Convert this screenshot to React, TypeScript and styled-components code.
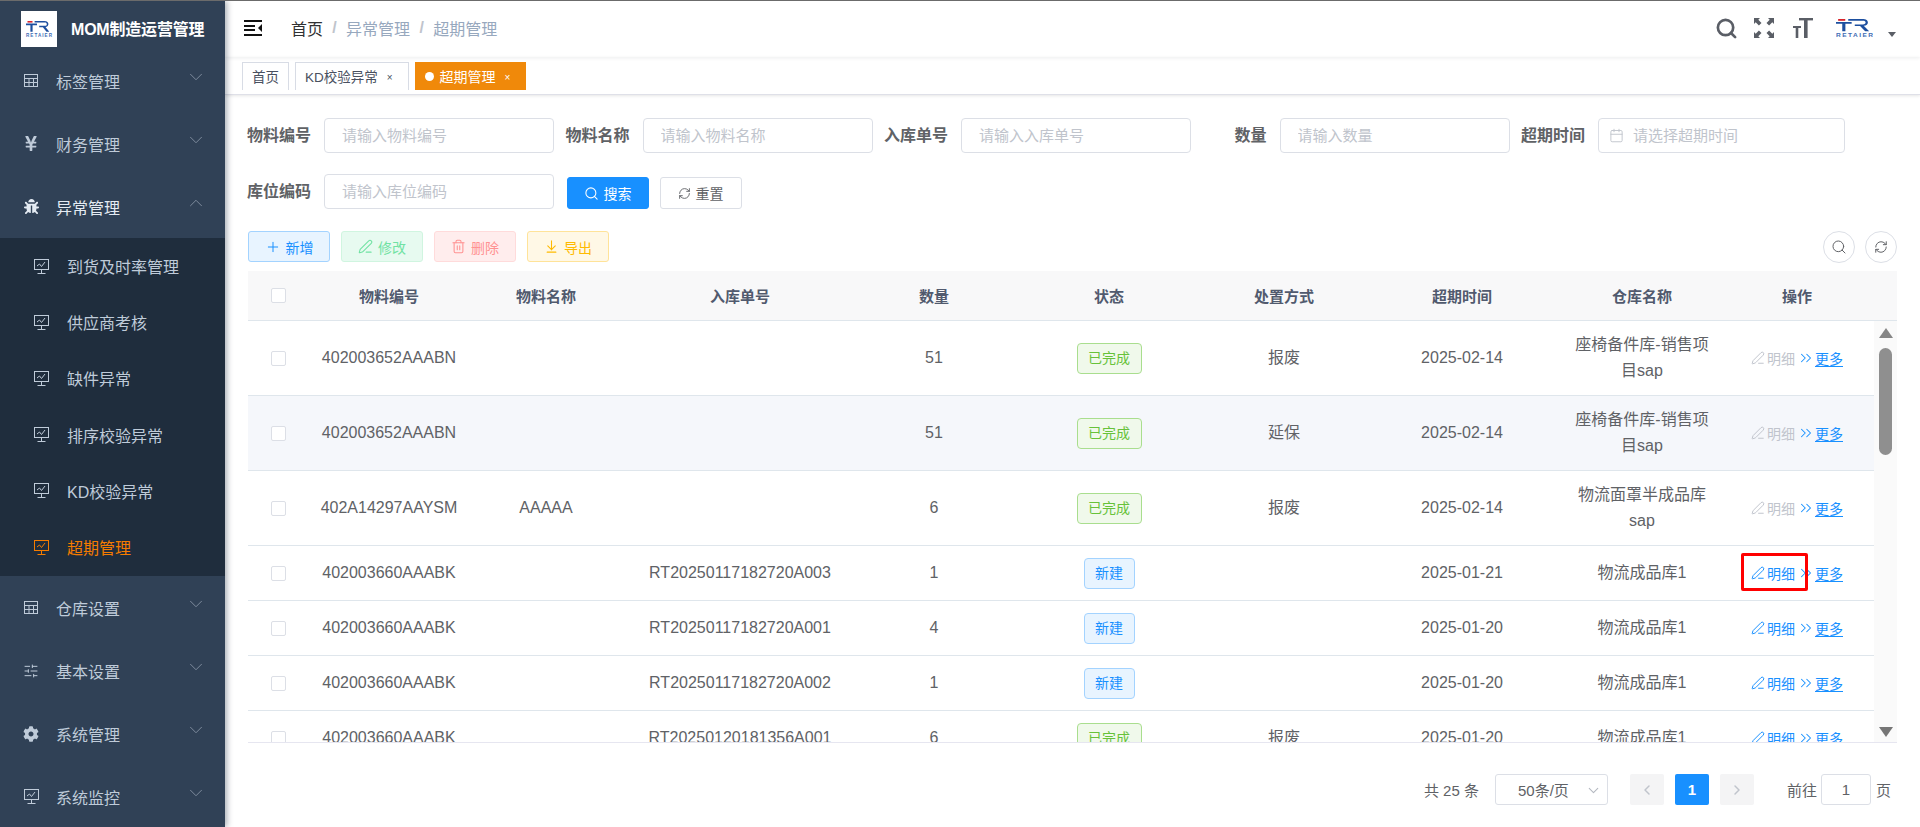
import { ReactNode } from 'react';
import styled, { createGlobalStyle } from 'styled-components';
import {
  ArrowDownToLine,
  Calendar,
  ChevronDown,
  ChevronLeft,
  ChevronRight,
  ChevronUp,
  ChevronsRight,
  PenLine,
  Plus,
  RefreshCw,
  Search,
  SlidersHorizontal,
  Trash2,
} from 'lucide-react';
import { FaBug, FaCog, FaYenSign } from 'react-icons/fa';

const GlobalStyle = createGlobalStyle`
  html, body {
    margin: 0;
    padding: 0;
    height: 100%;
    background: #fff;
  }
  body {
    font-family: "Liberation Sans", "Noto Sans CJK SC", sans-serif;
    color: #606266;
    overflow: hidden;
  }
  #root {
    height: 100%;
  }
  * {
    box-sizing: border-box;
  }
`;

// Layout
const Page = styled.div`
  display: flex;
  height: 100vh;
  border-top: 1px solid #6b6b6b;
  overflow: hidden;
`;

const Sidebar = styled.aside`
  width: 225px;
  flex-shrink: 0;
  background: #304156;
  box-shadow: 2px 0 6px rgba(0, 21, 41, 0.35);
  position: relative;
  z-index: 3;
  overflow: hidden;
`;

const Brand = styled.div`
  height: 48px;
  display: flex;
  align-items: flex-start;
  padding: 10px 0 0 21px;
`;

const BrandLogo = styled.div`
  width: 36px;
  height: 36px;
  background: #fff;
  display: flex;
  align-items: center;
  justify-content: center;
`;

const BrandTitle = styled.div`
  margin-left: 14px;
  font-size: 16px;
  font-weight: 700;
  letter-spacing: -0.2px;
  color: #fff;
  line-height: 38px;
  white-space: nowrap;
`;

const MenuRow = styled.div<{ $open?: boolean }>`
  height: 63px;
  display: flex;
  align-items: center;
  padding: 0 18px 0 23px;
  font-size: 16px;
  color: ${(p) => (p.$open ? '#e4ebf3' : '#bfcbd9')};
`;

const MenuIcon = styled.span`
  width: 16px;
  height: 20px;
  display: flex;
  align-items: center;
  justify-content: center;
  margin-right: 17px;
`;

const MenuCaret = styled.span`
  margin-left: auto;
  display: flex;
  color: #8391a2;
  margin-bottom: 7px;
`;

const SubMenu = styled.div`
  background: #1f2d3d;
  padding-bottom: 1px;
`;

const SubRow = styled.div<{ $active?: boolean }>`
  height: 56.2px;
  display: flex;
  align-items: center;
  padding-left: 34px;
  font-size: 16px;
  color: ${(p) => (p.$active ? '#f57c00' : '#bfcbd9')};
`;

const SubIcon = styled.span`
  display: flex;
  margin-right: 18px;
`;

const Main = styled.main`
  flex: 1;
  min-width: 0;
  display: flex;
  flex-direction: column;
`;

const Navbar = styled.header`
  height: 56px;
  display: flex;
  align-items: center;
  padding: 0 24px 2px 19px;
  box-shadow: 0 1px 4px rgba(0, 21, 41, 0.08);
  position: relative;
  z-index: 1;
`;

const Breadcrumb = styled.nav`
  display: flex;
  align-items: center;
  margin-left: 29px;
  font-size: 16px;
`;

const Crumb = styled.span<{ $home?: boolean }>`
  color: ${(p) => (p.$home ? '#303133' : '#97a8be')};
`;

const CrumbSep = styled.span`
  margin: 0 9.3px;
  color: #c0c4cc;
  font-weight: 700;
`;

const NavTools = styled.div`
  margin-left: auto;
  display: flex;
  align-items: center;
`;

const NavTool = styled.span<{ $gap: number }>`
  display: flex;
  margin-left: ${(p) => p.$gap}px;
  color: #5a5e66;
`;

const NavCaret = styled.span`
  width: 0;
  height: 0;
  margin: 13px 0 0 15px;
  border-left: 4px solid transparent;
  border-right: 4px solid transparent;
  border-top: 5px solid #5a5e66;
`;

const TabBar = styled.div`
  height: 38px;
  display: flex;
  gap: 6px;
  padding: 5px 0 0 17px;
  border-bottom: 1px solid #dfe0e8;
  box-shadow: 0 1px 3px rgba(0, 0, 0, 0.1);
  position: relative;
`;

const Tab = styled.div<{ $active?: boolean }>`
  height: 28px;
  display: flex;
  align-items: center;
  padding: 0 9px 1px;
  font-size: ${(p) => (p.$active ? '14px' : '13.5px')};
  color: ${(p) => (p.$active ? '#fff' : '#495060')};
  background: ${(p) => (p.$active ? '#f0890a' : '#fff')};
  border: 1px solid ${(p) => (p.$active ? '#f0890a' : '#d8dce5')};
  border-bottom: none;
`;

const TabDot = styled.span`
  width: 9px;
  height: 9px;
  border-radius: 50%;
  background: #fff;
  margin-right: 6px;
`;

const TabClose = styled.span`
  font-size: 10px;
  margin: 4px 6px 0 9px;
  line-height: 1;
`;

const Content = styled.div`
  flex: 1;
  min-height: 0;
`;

const SearchForm = styled.form`
  display: flex;
  flex-direction: column;
  gap: 21px;
  padding: 23px 0 0 19px;
`;

const FormRow = styled.div`
  display: flex;
  align-items: flex-start;
`;

const FormItem = styled.div`
  display: flex;
  align-items: center;
  margin-right: 8.5px;
  position: relative;
`;

const FormLabel = styled.label`
  width: 80px;
  padding: 0 13px 3px 0;
  text-align: right;
  font-size: 16px;
  font-weight: 700;
  color: #606266;
  white-space: nowrap;
`;

const TextInput = styled.input<{ $wide?: boolean }>`
  width: ${(p) => (p.$wide ? '247px' : '230px')};
  height: 35px;
  padding: 0 0 0 ${(p) => (p.$wide ? '34px' : '17px')};
  border: 1px solid #dcdfe6;
  border-radius: 4px;
  font: inherit;
  font-size: 15px;
  outline: none;
  &::placeholder {
    color: #c0c4cc;
    opacity: 1;
  }
`;

const DateIcon = styled.span`
  position: absolute;
  left: 91px;
  top: 10px;
  display: flex;
  color: #c0c4cc;
`;

const SearchButtons = styled.div`
  display: flex;
  gap: 11px;
  margin: 3px 0 0 4px;
`;

const Button = styled.button<{ $primary?: boolean }>`
  width: 82px;
  height: 32px;
  display: flex;
  align-items: center;
  justify-content: center;
  gap: 5px;
  padding: 0;
  font: inherit;
  font-size: 14px;
  border-radius: 3px;
  color: ${(p) => (p.$primary ? '#fff' : '#606266')};
  background: ${(p) => (p.$primary ? '#1890ff' : '#fff')};
  border: 1px solid ${(p) => (p.$primary ? '#1890ff' : '#dcdfe6')};
`;

const ActionBar = styled.div`
  display: flex;
  align-items: center;
  height: 31px;
  margin: 22px 23px 9px 23px;
  gap: 11px;
`;

const tones = {
  primary: { bg: '#e8f4ff', line: '#a3d3ff', text: '#1890ff' },
  success: { bg: '#e7faf0', line: '#d0f5e0', text: '#71e2a3' },
  danger: { bg: '#ffeded', line: '#ffdbdb', text: '#ff9292' },
  warning: { bg: '#fff8e6', line: '#ffe399', text: '#ffba00' },
};

const ToneButton = styled.button<{ $tone: keyof typeof tones }>`
  width: 82px;
  height: 31px;
  display: flex;
  align-items: center;
  justify-content: center;
  gap: 5px;
  padding: 0;
  font: inherit;
  font-size: 14px;
  border-radius: 3px;
  color: ${(p) => tones[p.$tone].text};
  background: ${(p) => tones[p.$tone].bg};
  border: 1px solid ${(p) => tones[p.$tone].line};
`;

const RoundGroup = styled.div`
  margin-left: auto;
  display: flex;
  gap: 10px;
`;

const RoundButton = styled.button`
  width: 32px;
  height: 32px;
  border-radius: 50%;
  border: 1px solid #dcdfe6;
  background: #fff;
  color: #606266;
  display: flex;
  align-items: center;
  justify-content: center;
  padding: 0;
`;

// Table
const TableWrap = styled.div`
  margin: 0 23px 0 23px;
`;

const gridColumns = '60px 162px 152px 236px 152px 198px 152px 204px 156px 154px';

const HeadRow = styled.div`
  height: 50px;
  display: grid;
  grid-template-columns: ${gridColumns};
  align-items: center;
  background: #f8f8f9;
  border-bottom: 1px solid #dfe6ec;
  font-size: 15px;
  font-weight: 700;
  color: #515a6e;
  text-align: center;
`;

const TableBody = styled.div`
  display: flex;
  height: 422px;
  border-bottom: 1px solid #e6e6f0;
`;

const RowsClip = styled.div`
  width: 1626px;
  overflow: hidden;
`;

const BodyRow = styled.div<{ $tall: boolean; $hover: boolean }>`
  height: ${(p) => (p.$tall ? '75px' : '55px')};
  display: grid;
  grid-template-columns: ${gridColumns};
  align-items: center;
  border-bottom: 1px solid #dfe6ec;
  background: ${(p) => (p.$hover ? '#f5f7fb' : '#fff')};
  font-size: 16px;
  color: #606266;
  text-align: center;
`;

const Cell = styled.div`
  padding: 0 10px;
  line-height: 26px;
  white-space: normal;
`;

const CodeCell = styled(Cell)`
  padding: 0;
  white-space: nowrap;
`;

const CheckCell = styled.div`
  display: flex;
  justify-content: center;
`;

const CheckBox = styled.span`
  width: 15px;
  height: 15px;
  border: 1px solid #dcdfe6;
  border-radius: 2px;
  background: #fff;
`;

const StatusTag = styled.span<{ $done: boolean }>`
  display: inline-block;
  height: 31px;
  line-height: 29px;
  padding: 0 10.5px;
  font-size: 14px;
  border-radius: 4px;
  color: ${(p) => (p.$done ? '#67c23a' : '#1890ff')};
  background: ${(p) => (p.$done ? '#f0f9eb' : '#e8f4ff')};
  border: 1px solid ${(p) => (p.$done ? '#a9de8e' : '#a3d3ff')};
`;

const OpsCell = styled.div`
  display: flex;
  justify-content: center;
  align-items: center;
  gap: 2px;
  font-size: 14px;
  position: relative;
`;

const OpLink = styled.span<{ $muted?: boolean }>`
  display: inline-flex;
  align-items: center;
  gap: ${(p) => (p.$muted !== undefined ? '2px' : '0')};
  color: ${(p) => (p.$muted ? '#c0c4cc' : '#1890ff')};
`;

const MoreText = styled.span`
  text-decoration: underline;
  text-underline-offset: 2px;
  text-decoration-thickness: 1px;
`;

const Highlight = styled.span`
  position: absolute;
  left: 21px;
  top: -10px;
  width: 67px;
  height: 38px;
  border: 3px solid #f00;
  border-radius: 2px;
  pointer-events: none;
`;

const ScrollTrack = styled.div`
  width: 23px;
  background: #fafafa;
  display: flex;
  flex-direction: column;
  align-items: center;
  padding: 7px 0 5px;
`;

const ScrollUp = styled.span`
  width: 0;
  height: 0;
  border-left: 7.5px solid transparent;
  border-right: 7.5px solid transparent;
  border-bottom: 10px solid #868686;
`;

const ScrollThumb = styled.span`
  width: 13px;
  height: 107px;
  margin-top: 10px;
  border-radius: 7px;
  background: #8f8f8f;
`;

const ScrollDown = styled.span`
  width: 0;
  height: 0;
  margin-top: auto;
  border-left: 7.5px solid transparent;
  border-right: 7.5px solid transparent;
  border-top: 10px solid #767676;
`;

// Pagination
const Pagination = styled.div`
  display: flex;
  align-items: center;
  justify-content: flex-end;
  height: 31px;
  margin-top: 31px;
  padding-right: 29px;
  font-size: 15px;
  color: #606266;
`;

const PageSelect = styled.div`
  width: 113px;
  height: 31px;
  margin: 0 22px 0 16px;
  padding-left: 22px;
  display: flex;
  align-items: center;
  border: 1px solid #dcdfe6;
  border-radius: 3px;
  position: relative;
`;

const SelectCaret = styled.span`
  position: absolute;
  right: 5px;
  top: 7px;
  display: flex;
  color: #b4b8c0;
`;

const PageButton = styled.span<{ $current?: boolean }>`
  width: 34px;
  height: 31px;
  margin-right: 11px;
  display: flex;
  align-items: center;
  justify-content: center;
  border-radius: 2px;
  font-size: 15px;
  font-weight: 700;
  color: ${(p) => (p.$current ? '#fff' : '#c0c4cc')};
  background: ${(p) => (p.$current ? '#1890ff' : '#f4f4f5')};
`;

const GotoInput = styled.div`
  width: 50px;
  height: 31px;
  margin: 0 5px 0 4px;
  display: flex;
  align-items: center;
  justify-content: center;
  border: 1px solid #dcdfe6;
  border-radius: 3px;
`;

const GotoLabel = styled.span`
  margin-left: 22px;
`;

// Drawn icons
const Logo = ({ w, h, box }: { w: number; h: number; box: string }) => (
  <svg width={w} height={h} viewBox={box} preserveAspectRatio="none">
    <rect x="6.5" y="11" width="5" height="1.6" fill="#d8232a" />
    <path d="M5 13.600h11v1.600h-4.400v6.600H9.400v-6.600H5z" fill="#1d4f9f" />
    <path
      d="M13.600 11h9.600c3.200 0 4.200 1.400 4.200 3.100 0 1.600-1 2.700-2.900 3l3.800 4.700h-2.800l-3.600-4.500h-3.700v-1.500h5.600c1.400 0 2-.6 2-1.600 0-1-.6-1.600-2-1.600h-10.200z"
      fill="#1d4f9f"
    />
    <text x="18" y="27" fontSize="4.600" fontWeight="700" fill="#3f6db5" textAnchor="middle" textLength="26" fontFamily="Liberation Sans, sans-serif">
      RETAIER
    </text>
  </svg>
);

const MonitorIcon = () => (
  <svg width="15" height="15" viewBox="0 0 15 15" fill="none" stroke="currentColor" strokeWidth="1">
    <rect x="0.5" y="0.5" width="14" height="10" />
    <path d="M3 7l2.500-2 2 2.500L11 3" />
    <path d="M7.500 10.500v3.500M3.500 14.500h8" />
  </svg>
);

const GridIcon = () => (
  <svg width="14" height="13" viewBox="0 0 14 13" fill="none" stroke="currentColor" strokeWidth="1">
    <rect x="0.5" y="0.5" width="13" height="12" />
    <path d="M0.5 4.500h13M0.5 8.500h13M5 4.500v8M9.500 4.500v8" />
  </svg>
);

const HamburgerIcon = () => (
  <svg width="18" height="16" viewBox="0 0 18 16" fill="#111">
    <rect x="0" y="0" width="18" height="2" />
    <rect x="0" y="14" width="18" height="2" />
    <rect x="0" y="5" width="11" height="2" />
    <rect x="0" y="9" width="11" height="2" />
    <path d="M18 4v8l-4-4z" />
  </svg>
);

const FullscreenIcon = () => (
  <svg width="20" height="20" viewBox="0 0 20 20" fill="currentColor">
    <path d="M0 0h6L4.300 1.700 7.500 4.900 4.900 7.500 1.700 4.300 0 6z" />
    <path d="M20 0h-6l1.700 1.700-3.200 3.200 2.600 2.600 3.200-3.200L20 6z" />
    <path d="M0 20h6l-1.700-1.700 3.200-3.200-2.600-2.600-3.200 3.200L0 14z" />
    <path d="M20 20h-6l1.700-1.700-3.200-3.200 2.600-2.600 3.200 3.200L20 14z" />
  </svg>
);

const FontSizeIcon = () => (
  <svg width="20" height="20" viewBox="0 0 20 20" fill="currentColor">
    <rect x="6" y="0" width="14" height="2.400" />
    <rect x="11" y="0" width="3.600" height="20" />
    <rect x="0" y="8" width="8" height="2" />
    <rect x="2.700" y="8" width="2.600" height="12" />
  </svg>
);

type MenuEntry = { label: string; icon: ReactNode };

const topMenus: MenuEntry[] = [
  { label: '标签管理', icon: <GridIcon /> },
  { label: '财务管理', icon: <FaYenSign size={17} /> },
];

const bottomMenus: MenuEntry[] = [
  { label: '仓库设置', icon: <GridIcon /> },
  { label: '基本设置', icon: <SlidersHorizontal size={16} strokeWidth={1.5} /> },
  { label: '系统管理', icon: <FaCog size={16} /> },
  { label: '系统监控', icon: <MonitorIcon /> },
];

const subMenus = ['到货及时率管理', '供应商考核', '缺件异常', '排序校验异常', 'KD校验异常', '超期管理'];

const columns = ['物料编号', '物料名称', '入库单号', '数量', '状态', '处置方式', '超期时间', '仓库名称', '操作'];

type Row = {
  code: string;
  name: string;
  order: string;
  qty: number;
  done: boolean;
  handling: string;
  date: string;
  store: string;
};

const rows: Row[] = [
  { code: '402003652AAABN', name: '', order: '', qty: 51, done: true, handling: '报废', date: '2025-02-14', store: '座椅备件库-销售项目sap' },
  { code: '402003652AAABN', name: '', order: '', qty: 51, done: true, handling: '延保', date: '2025-02-14', store: '座椅备件库-销售项目sap' },
  { code: '402A14297AAYSM', name: 'AAAAA', order: '', qty: 6, done: true, handling: '报废', date: '2025-02-14', store: '物流面罩半成品库sap' },
  { code: '402003660AAABK', name: '', order: 'RT20250117182720A003', qty: 1, done: false, handling: '', date: '2025-01-21', store: '物流成品库1' },
  { code: '402003660AAABK', name: '', order: 'RT20250117182720A001', qty: 4, done: false, handling: '', date: '2025-01-20', store: '物流成品库1' },
  { code: '402003660AAABK', name: '', order: 'RT20250117182720A002', qty: 1, done: false, handling: '', date: '2025-01-20', store: '物流成品库1' },
  { code: '402003660AAABK', name: '', order: 'RT20250120181356A001', qty: 6, done: true, handling: '报废', date: '2025-01-20', store: '物流成品库1' },
];

export default function App() {
  return (
    <>
      <GlobalStyle />
      <Page>
        <Sidebar>
          <Brand>
            <BrandLogo>
              <Logo w={30} h={24} box="3 7 30 24" />
            </BrandLogo>
            <BrandTitle>MOM制造运营管理</BrandTitle>
          </Brand>
          {topMenus.map((m) => (
            <MenuRow key={m.label}>
              <MenuIcon>{m.icon}</MenuIcon>
              {m.label}
              <MenuCaret>
                <ChevronDown size={22} strokeWidth={1} />
              </MenuCaret>
            </MenuRow>
          ))}
          <MenuRow $open>
            <MenuIcon>
              <FaBug size={15} />
            </MenuIcon>
            异常管理
            <MenuCaret>
              <ChevronUp size={22} strokeWidth={1} />
            </MenuCaret>
          </MenuRow>
          <SubMenu>
            {subMenus.map((label) => (
              <SubRow key={label} $active={label === '超期管理'}>
                <SubIcon>
                  <MonitorIcon />
                </SubIcon>
                {label}
              </SubRow>
            ))}
          </SubMenu>
          {bottomMenus.map((m) => (
            <MenuRow key={m.label}>
              <MenuIcon>{m.icon}</MenuIcon>
              {m.label}
              <MenuCaret>
                <ChevronDown size={22} strokeWidth={1} />
              </MenuCaret>
            </MenuRow>
          ))}
        </Sidebar>

        <Main>
          <Navbar>
            <HamburgerIcon />
            <Breadcrumb>
              <Crumb $home>首页</Crumb>
              <CrumbSep>/</CrumbSep>
              <Crumb>异常管理</Crumb>
              <CrumbSep>/</CrumbSep>
              <Crumb>超期管理</Crumb>
            </Breadcrumb>
            <NavTools>
              <NavTool $gap={0}>
                <Search size={23} strokeWidth={2.8} />
              </NavTool>
              <NavTool $gap={16}>
                <FullscreenIcon />
              </NavTool>
              <NavTool $gap={19}>
                <FontSizeIcon />
              </NavTool>
              <NavTool $gap={23}>
                <Logo w={37} h={18} box="5 11 26 16" />
              </NavTool>
              <NavCaret />
            </NavTools>
          </Navbar>

          <TabBar>
            <Tab>首页</Tab>
            <Tab>
              KD校验异常
              <TabClose>×</TabClose>
            </Tab>
            <Tab $active>
              <TabDot />
              超期管理
              <TabClose>×</TabClose>
            </Tab>
          </TabBar>

          <Content>
            <SearchForm>
              <FormRow>
                <FormItem>
                  <FormLabel>物料编号</FormLabel>
                  <TextInput placeholder="请输入物料编号" />
                </FormItem>
                <FormItem>
                  <FormLabel>物料名称</FormLabel>
                  <TextInput placeholder="请输入物料名称" />
                </FormItem>
                <FormItem>
                  <FormLabel>入库单号</FormLabel>
                  <TextInput placeholder="请输入入库单号" />
                </FormItem>
                <FormItem>
                  <FormLabel>数量</FormLabel>
                  <TextInput placeholder="请输入数量" />
                </FormItem>
                <FormItem>
                  <FormLabel>超期时间</FormLabel>
                  <TextInput $wide placeholder="请选择超期时间" />
                  <DateIcon>
                    <Calendar size={15} strokeWidth={1.5} />
                  </DateIcon>
                </FormItem>
              </FormRow>
              <FormRow>
                <FormItem>
                  <FormLabel>库位编码</FormLabel>
                  <TextInput placeholder="请输入库位编码" />
                </FormItem>
                <SearchButtons>
                  <Button type="button" $primary>
                    <Search size={15} strokeWidth={1.7} />
                    搜索
                  </Button>
                  <Button type="button">
                    <RefreshCw size={13} strokeWidth={1.7} />
                    重置
                  </Button>
                </SearchButtons>
              </FormRow>
            </SearchForm>

            <ActionBar>
              <ToneButton $tone="primary">
                <Plus size={16} strokeWidth={1.5} />
                新增
              </ToneButton>
              <ToneButton $tone="success">
                <PenLine size={15} strokeWidth={1.7} />
                修改
              </ToneButton>
              <ToneButton $tone="danger">
                <Trash2 size={15} strokeWidth={1.7} />
                删除
              </ToneButton>
              <ToneButton $tone="warning">
                <ArrowDownToLine size={15} strokeWidth={1.7} />
                导出
              </ToneButton>
              <RoundGroup>
                <RoundButton>
                  <Search size={16} strokeWidth={1.5} />
                </RoundButton>
                <RoundButton>
                  <RefreshCw size={14} strokeWidth={1.7} />
                </RoundButton>
              </RoundGroup>
            </ActionBar>

            <TableWrap>
              <HeadRow>
                <CheckCell>
                  <CheckBox />
                </CheckCell>
                {columns.map((c) => (
                  <div key={c}>{c}</div>
                ))}
              </HeadRow>
              <TableBody>
                <RowsClip>
                  {rows.map((r, i) => (
                    <BodyRow key={i} $tall={i < 3} $hover={i === 1}>
                      <CheckCell>
                        <CheckBox />
                      </CheckCell>
                      <CodeCell>{r.code}</CodeCell>
                      <Cell>{r.name}</Cell>
                      <CodeCell>{r.order}</CodeCell>
                      <Cell>{r.qty}</Cell>
                      <Cell>
                        <StatusTag $done={r.done}>{r.done ? '已完成' : '新建'}</StatusTag>
                      </Cell>
                      <Cell>{r.handling}</Cell>
                      <Cell>{r.date}</Cell>
                      <Cell>{r.store}</Cell>
                      <OpsCell>
                        <OpLink $muted={i < 3}>
                          <PenLine size={14} strokeWidth={1.7} />
                          明细
                        </OpLink>
                        <OpLink>
                          <ChevronsRight size={18} strokeWidth={1.4} />
                          <MoreText>更多</MoreText>
                        </OpLink>
                        {i === 3 && <Highlight />}
                      </OpsCell>
                    </BodyRow>
                  ))}
                </RowsClip>
                <ScrollTrack>
                  <ScrollUp />
                  <ScrollThumb />
                  <ScrollDown />
                </ScrollTrack>
              </TableBody>
            </TableWrap>

            <Pagination>
              共 25 条
              <PageSelect>
                50条/页
                <SelectCaret>
                  <ChevronDown size={17} strokeWidth={1.5} />
                </SelectCaret>
              </PageSelect>
              <PageButton>
                <ChevronLeft size={16} strokeWidth={2.2} />
              </PageButton>
              <PageButton $current>1</PageButton>
              <PageButton>
                <ChevronRight size={16} strokeWidth={2.2} />
              </PageButton>
              <GotoLabel>前往</GotoLabel>
              <GotoInput>1</GotoInput>页
            </Pagination>
          </Content>
        </Main>
      </Page>
    </>
  );
}
